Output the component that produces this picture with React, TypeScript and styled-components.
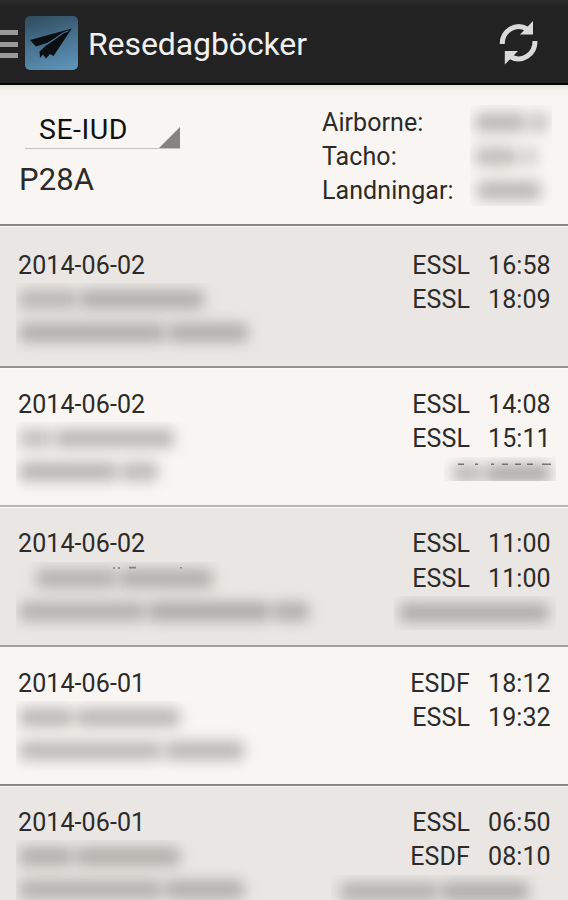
import React from "react";
import styled, { createGlobalStyle } from "styled-components";

const GlobalStyle = createGlobalStyle`
  * { box-sizing: border-box; }
  body {
    margin: 0;
    background: #f8f5f2;
    color: #2c2b2a;
    font-family: Roboto, "Noto Sans", sans-serif;
    font-size: 25px;
    line-height: 34.4px;
    overflow: hidden;
  }
`;

const Screen = styled.div`
  width: 568px;
  height: 900px;
  overflow: hidden;
  display: flex;
  flex-direction: column;
`;

const ActionBar = styled.header`
  flex: none;
  height: 85px;
  display: flex;
  align-items: center;
  padding-right: 28px;
  background: linear-gradient(#2c2c2c, #222 7px);
  border-bottom: 2px solid #050505;
`;

const DrawerHandle = styled.div`
  width: 18px;
  height: 28px;
  margin: 5px 7px 0 0;
  display: flex;
  flex-direction: column;
  justify-content: space-between;
`;

const HandleBar = styled.span`
  height: 5px;
  background: #9a9a9a;
`;

const AppIcon = styled.div`
  width: 53px;
  height: 54px;
  margin-top: 2px;
  border-radius: 5px;
  background: linear-gradient(165deg, #2f4a5d 0%, #466f8c 45%, #5f97be 100%);
  svg { display: block; }
`;

const Title = styled.h1`
  flex: 1;
  margin: 4px 0 0 10px;
  font-size: 32px;
  line-height: 40px;
  font-weight: 400;
  letter-spacing: -0.1px;
  color: #f0f0f0;
`;

const RefreshButton = styled.button`
  width: 42px;
  height: 46px;
  margin-top: 3px;
  padding: 0;
  border: 0;
  background: none;
  svg { display: block; }
`;

const Summary = styled.section`
  flex: none;
  height: 141px;
  display: flex;
  justify-content: space-between;
  padding: 20px 14px 0 19px;
  background: linear-gradient(#e6e4e0, #f3f0ec 5px, #f8f5f2 13px);
  border-bottom: 2px solid #8a8886;
`;

const Aircraft = styled.div`
  width: 170px;
`;

const Spinner = styled.div`
  width: 155px;
  height: 44px;
  margin-left: 6px;
  padding-left: 14px;
  display: flex;
  justify-content: space-between;
  align-items: flex-end;
  border-bottom: 1px solid #c4c2bf;
  color: #111;
`;

const Registration = styled.span`
  font-size: 28.5px;
  line-height: 36px;
  letter-spacing: 0.5px;
`;

const SpinnerCorner = styled.span`
  width: 21px;
  height: 21px;
  background: #858482;
  clip-path: polygon(100% 0, 100% 100%, 0 100%);
`;

const Model = styled.div`
  margin-top: 11px;
  font-size: 31px;
  line-height: 40px;
  letter-spacing: 0.1px;
`;

const Totals = styled.div`
  display: flex;
  width: 232px;
`;

const TotalLabels = styled.div`
  width: 148px;
  padding-top: 0.6px;
  letter-spacing: 0.08px;
`;

const Hidden = styled.div<{ $w: number; $h?: number }>`
  flex: none;
  width: ${(p) => p.$w}px;
  height: ${(p) => p.$h ?? 76}px;
  overflow: hidden;
`;

const HiddenLine = styled.div<{ $indent?: number; $tall?: boolean }>`
  height: ${(p) => (p.$tall ? 34.4 : 33)}px;
  display: flex;
  align-items: center;
  padding-left: ${(p) => p.$indent ?? 3}px;
`;

const Smudge = styled.span<{ $w: number; $tone?: number }>`
  width: ${(p) => p.$w}px;
  height: 19px;
  margin-right: 3px;
  border-radius: 6px;
  background: rgba(95, 93, 90, ${(p) => p.$tone ?? 0.36});
  filter: blur(7px);
`;

const Entry = styled.article<{ $shaded: boolean; $h: number; $pad: number; $line: string }>`
  flex: none;
  height: ${(p) => p.$h}px;
  display: flex;
  justify-content: space-between;
  padding: ${(p) => p.$pad}px 12px 0 16px;
  background: ${(p) => (p.$shaded ? "#e9e6e3" : "#f8f5f2")};
  border-bottom: 2px solid ${(p) => p.$line};
  box-shadow: inset 0 1px 0 #fbf9f7;
`;

const Details = styled.div`
  display: flex;
  flex-direction: column;
`;

const Day = styled.div`
  padding-left: 2px;
  letter-spacing: 0.1px;
`;

const Legs = styled.div`
  display: flex;
  flex-direction: column;
  align-items: flex-end;
`;

const Leg = styled.div`
  display: flex;
  padding-right: 6px;
`;

const Airport = styled.span`
  margin-right: 18px;
  letter-spacing: 0.1px;
`;

const Time = styled.span`
  width: 62px;
  letter-spacing: 0.1px;
`;

/* Slivers of glyph tops that stick out above a hidden line. */
const GlyphTops = styled.svg<{ $pull: number; $push: number }>`
  display: block;
  flex: none;
  margin-top: ${(p) => p.$push}px;
  margin-bottom: ${(p) => p.$pull}px;
`;

type Line = { indent?: number; bars: [number, number?][] };
type Block = { w: number; h?: number; tall?: boolean; lines: Line[] };

function Redacted({ block }: { block: Block }) {
  return (
    <Hidden $w={block.w} $h={block.h} aria-hidden>
      {block.lines.map((line, i) => (
        <HiddenLine key={i} $indent={line.indent} $tall={block.tall}>
          {line.bars.map(([w, tone], j) => (
            <Smudge key={j} $w={w} $tone={tone} />
          ))}
        </HiddenLine>
      ))}
    </Hidden>
  );
}

type EntryData = {
  date: string;
  legs: [string, string][];
  h: number;
  pad: number;
  line: string;
  left: Block;
  right?: Block;
  marks?: "left" | "right";
};

const entries: EntryData[] = [
  {
    date: "2014-06-02",
    legs: [["ESSL", "16:58"], ["ESSL", "18:09"]],
    h: 142, pad: 23, line: "#95928f",
    left: { w: 250, lines: [{ bars: [[58, 0.34], [124, 0.4]] }, { bars: [[146, 0.4], [80, 0.4]] }] },
  },
  {
    date: "2014-06-02",
    legs: [["ESSL", "14:08"], ["ESSL", "15:11"]],
    h: 139, pad: 20, line: "#b9b5b1",
    left: { w: 190, lines: [{ bars: [[33, 0.34], [119, 0.4]] }, { bars: [[98, 0.42], [38, 0.38]] }] },
    right: { w: 112, h: 24, lines: [{ indent: 8, bars: [[30, 0.38], [66, 0.48]] }] },
    marks: "right",
  },
  {
    date: "2014-06-02",
    legs: [["ESSL", "11:00"], ["ESSL", "11:00"]],
    h: 140, pad: 20.4, line: "#a4a09d",
    left: { w: 320, lines: [{ indent: 20, bars: [[80, 0.38], [94, 0.4]] }, { bars: [[126, 0.38], [122, 0.43], [36, 0.4]] }] },
    right: { w: 162, h: 34, lines: [{ indent: 5, bars: [[150, 0.42]] }] },
    marks: "left",
  },
  {
    date: "2014-06-01",
    legs: [["ESDF", "18:12"], ["ESSL", "19:32"]],
    h: 139, pad: 20, line: "#898583",
    left: { w: 250, lines: [{ bars: [[54, 0.4], [104, 0.4]] }, { bars: [[143, 0.38], [79, 0.4]] }] },
  },
  {
    date: "2014-06-01",
    legs: [["ESSL", "06:50"], ["ESDF", "08:10"]],
    h: 142, pad: 20, line: "#898583",
    left: { w: 250, lines: [{ bars: [[54, 0.4], [104, 0.4]] }, { bars: [[143, 0.38], [79, 0.4]] }] },
    right: { w: 225, h: 34, lines: [{ indent: 9, bars: [[98, 0.38], [88, 0.42]] }] },
  },
];

const totals: Block = {
  w: 82, h: 101, tall: true,
  lines: [
    { indent: 5, bars: [[50, 0.4], [20, 0.32]] },
    { indent: 5, bars: [[42, 0.36], [18, 0.24]] },
    { indent: 7, bars: [[64, 0.4]] },
  ],
};

export default function App() {
  return (
    <>
      <GlobalStyle />
      <Screen>
        <ActionBar>
          <DrawerHandle>
            <HandleBar />
            <HandleBar />
            <HandleBar />
          </DrawerHandle>
          <AppIcon>
            <svg width="53" height="54" viewBox="0 0 53 54">
              <path
                d="M46.8 12.6 L5 24 L11 30.5 L22 27 L37 18.5 L21 29.5 L14.5 35.5 L15 42 L18 38.5 L21 42.5 L25 38 L28.5 40 Z"
                fill="#0b0f12"
              />
              <path d="M43.5 14.8 L38 17 L22.5 28 L12.5 31.5" stroke="#456c86" strokeWidth="1.1" fill="none" />
            </svg>
          </AppIcon>
          <Title>Resedagböcker</Title>
          <RefreshButton aria-label="Uppdatera">
            <svg width="42" height="46" viewBox="0 0 42 46" fill="none">
              <path d="M4.2 24 A16.5 17.5 0 0 1 29 9" stroke="#dadada" strokeWidth="5" />
              <path d="M35 1 V14.5 H22 Z" fill="#dadada" />
              <path d="M37 21 A16.5 17.5 0 0 1 12.2 36.5" stroke="#dadada" strokeWidth="5" />
              <path d="M6.8 44.5 V31 H20 Z" fill="#dadada" />
            </svg>
          </RefreshButton>
        </ActionBar>

        <Summary>
          <Aircraft>
            <Spinner>
              <Registration>SE-IUD</Registration>
              <SpinnerCorner />
            </Spinner>
            <Model>P28A</Model>
          </Aircraft>
          <Totals>
            <TotalLabels>
              <div>Airborne:</div>
              <div>Tacho:</div>
              <div>Landningar:</div>
            </TotalLabels>
            <Redacted block={totals} />
          </Totals>
        </Summary>

        {entries.map((e, i) => (
          <Entry key={i} $shaded={i % 2 === 0} $h={e.h} $pad={e.pad} $line={e.line}>
            <Details>
              <Day>{e.date}</Day>
              {e.marks === "left" && (
                <GlyphTops $push={4} $pull={-7} width="200" height="3" viewBox="0 0 200 3">
                  <path d="M98 1v2M103 1v2M113 1.6h7M165 1v1.6" stroke="#8b8987" strokeWidth="1.6" />
                </GlyphTops>
              )}
              <Redacted block={e.left} />
            </Details>
            <Legs>
              {e.legs.map(([airport, time], j) => (
                <Leg key={j}>
                  <Airport>{airport}</Airport>
                  <Time>{time}</Time>
                </Leg>
              ))}
              {e.marks === "right" && (
                <GlyphTops $push={6} $pull={-8} width="106" height="2" viewBox="0 0 106 2">
                  <path d="M8 1.2h6M25 1.2h3M41 1.2h3M52 1.2h6M65 1.2h6M77 1.2h6M92 1.2h9" stroke="#7d7b79" strokeWidth="1.4" />
                </GlyphTops>
              )}
              {e.right && <Redacted block={e.right} />}
            </Legs>
          </Entry>
        ))}
      </Screen>
    </>
  );
}
